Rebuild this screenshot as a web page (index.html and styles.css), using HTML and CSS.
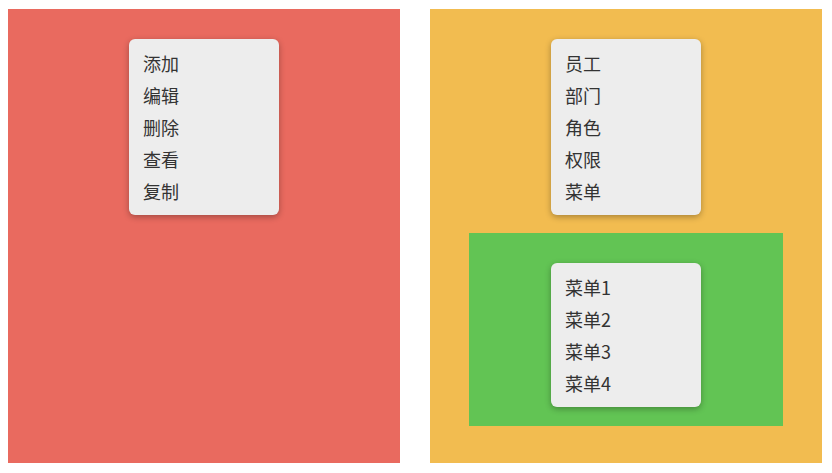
FILE: index.html
```html
<!DOCTYPE html>
<html lang="zh-CN">
<head>
    <meta charset="UTF-8">
    <meta name="viewport" content="width=device-width, initial-scale=1.0">
    <title>右键菜单</title>
    <link rel="stylesheet" href="styles.css">
</head>
<body>
    <div class="wrap">
        <div class="panel panel-red">
            <ul class="menu">
                <li>添加</li>
                <li>编辑</li>
                <li>删除</li>
                <li>查看</li>
                <li>复制</li>
            </ul>
        </div>

        <div class="panel panel-yellow">
            <ul class="menu">
                <li>员工</li>
                <li>部门</li>
                <li>角色</li>
                <li>权限</li>
                <li>菜单</li>
            </ul>
            <div class="inner-green">
                <ul class="menu">
                    <li>菜单1</li>
                    <li>菜单2</li>
                    <li>菜单3</li>
                    <li>菜单4</li>
                </ul>
            </div>
        </div>
    </div>
</body>
</html>
```

FILE: styles.css
```css
body {
    margin: 0;
    padding: 9px 8px;
    font-family: "Noto Sans CJK SC", "Noto Sans", sans-serif;
    background: #fff;
}
.wrap {
    display: flex;
    gap: 30px;
}
.panel {
    width: 392px;
    height: 454px;
    box-sizing: border-box;
    padding-top: 30px;
    display: flex;
    flex-direction: column;
    align-items: center;
}
.panel-red {
    background-color: #e96a5f;
}
.panel-yellow {
    background-color: #f2bc50;
}
.inner-green {
    width: 314px;
    margin-top: 18px;
    padding: 30px 0 19px;
    background-color: #62c454;
    display: flex;
    justify-content: center;
}
.menu {
    list-style: none;
    margin: 0;
    padding: 8px 0;
    width: 150px;
    box-sizing: border-box;
    background: #ededed;
    border-radius: 6px;
    box-shadow: 0 2px 6px rgba(0,0,0,0.3);
}
.menu li {
    height: 32px;
    line-height: 32px;
    padding-left: 14px;
    font-size: 18px;
    color: #333;
}
```
